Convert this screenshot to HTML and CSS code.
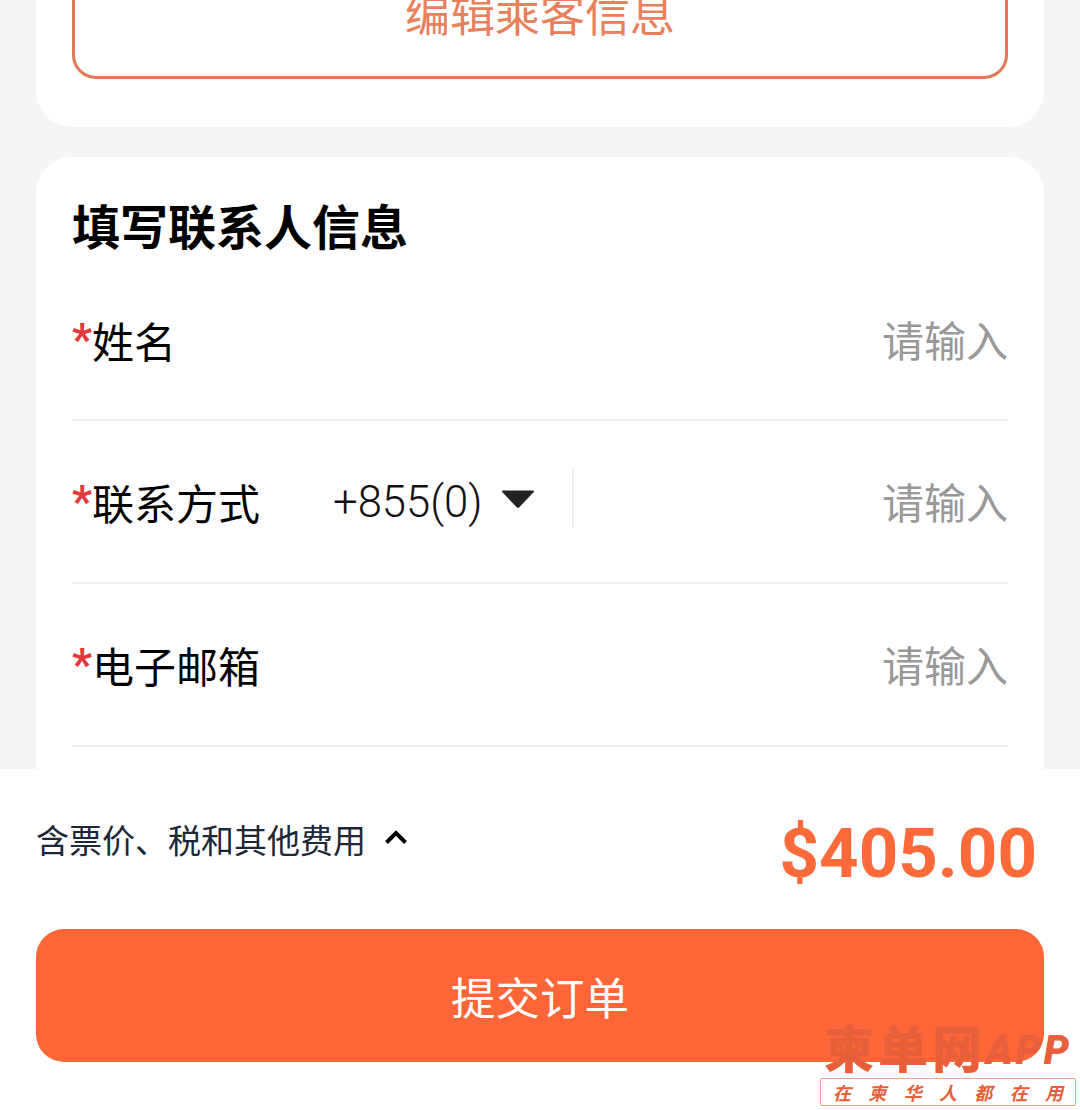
FILE: index.html
```html
<!DOCTYPE html>
<html lang="zh-CN">

<head>
	<meta charset="UTF-8">
	<meta name="viewport" content="width=device-width, initial-scale=1.0">
	<title>填写联系人信息</title>
	<link rel="stylesheet" href="styles.css">
</head>

<body>
	<div class="page">
		<!-- 乘客信息 -->
		<section class="card card-passenger">
			<button class="edit-btn" type="button">编辑乘客信息</button>
		</section>

		<!-- 联系人信息 -->
		<section class="card card-contact">
			<h2 class="card-title">填写联系人信息</h2>

			<div class="form-row">
				<label class="row-label"><span class="star">*</span>姓名</label>
				<span class="placeholder">请输入</span>
			</div>

			<div class="form-row">
				<label class="row-label"><span class="star">*</span>联系方式</label>
				<div class="phone-code">
					<span>+855(0)</span>
					<svg class="caret" width="34" height="20" viewBox="0 0 34 20">
						<path d="M2 1.5h30a1 1 0 0 1 .8 1.6L18 18.500a1.500 1.500 0 0 1-2 0L1.200 3.100A1 1 0 0 1 2 1.500z" fill="#222"/>
					</svg>
				</div>
				<span class="phone-sep"></span>
				<span class="placeholder">请输入</span>
			</div>

			<div class="form-row">
				<label class="row-label"><span class="star">*</span>电子邮箱</label>
				<span class="placeholder">请输入</span>
			</div>
		</section>
	</div>

	<!-- 底部价格栏 -->
	<footer class="bottom-bar">
		<div class="price-row">
			<div class="price-note">
				<span>含票价、税和其他费用</span>
				<svg class="note-arrow" width="24" height="16" viewBox="0 0 24 16">
					<path d="M2.500 13.500L12 4l9.500 9.500" fill="none" stroke="#000" stroke-width="4"/>
				</svg>
			</div>
			<div class="price">$405.00</div>
		</div>
		<button class="submit-btn" type="button">提交订单</button>
	</footer>

	<!-- 水印 -->
	<div class="watermark">
		<div class="wm-logo"><span class="wm-name">柬单网</span><span class="wm-app">APP</span></div>
		<div class="wm-slogan">
			<span>在</span><span>柬</span><span>华</span><span>人</span><span>都</span><span>在</span><span>用</span>
		</div>
	</div>
</body>

</html>
```

FILE: styles.css
```css
* {
	box-sizing: border-box;
}

html,
body {
	margin: 0;
	padding: 0;
}

body {
	position: relative;
	height: 1110px;
	overflow: hidden;
	background-color: #f5f5f5;
	font-family: Roboto, "Noto Sans CJK SC", sans-serif;
	color: #000;
}

.page {
	padding: 0 36px;
}

.card {
	background: #fff;
	border-radius: 36px;
	padding: 0 36px;
}

.card-passenger {
	margin-top: -49px;
	padding-bottom: 48px;
	margin-bottom: 30px;
}

.edit-btn {
	display: block;
	width: 100%;
	height: 128px;
	border: 3px solid #e07a58;
	border-radius: 24px;
	background: #fff;
	color: #e8805c;
	font-family: inherit;
	font-size: 45px;
	padding: 0 0 6px;
}

.card-contact {
	padding-top: 41px;
	height: 640px;
}

.card-title {
	margin: 0;
	font-size: 48px;
	line-height: 62px;
	font-weight: 700;
}

.form-row {
	display: flex;
	align-items: center;
	height: 163px;
	border-bottom: 2px solid #eee;
}

.card-title + .form-row {
	height: 161px;
}

.row-label {
	font-size: 42px;
	line-height: 56px;
	width: 261px;
	flex: none;
	margin-top: 8px;
	white-space: nowrap;
}

.star {
	color: #e5383b;
	font-size: 44px;
	font-weight: 700;
	line-height: 1;
	vertical-align: 3px;
}

.placeholder {
	margin-left: auto;
	margin-top: -2px;
	font-size: 42px;
	color: #999;
}

.phone-code {
	display: flex;
	align-items: center;
	gap: 18px;
	margin-top: 2px;
	font-size: 43.600px;
	font-weight: 300;
	color: #111;
}

.caret {
	margin-top: -8px;
}

.phone-sep {
	width: 2px;
	height: 60px;
	margin: -6px 0 0 37px;
	background: #eee;
}

.bottom-bar {
	position: absolute;
	left: 0;
	right: 0;
	top: 769px;
	bottom: 0;
	background: #fff;
	padding: 0 36px;
}

.price-row {
	display: flex;
	justify-content: space-between;
	align-items: center;
	height: 160px;
}

.price-note {
	display: flex;
	align-items: center;
	gap: 18px;
	font-size: 33px;
	color: #1c2738;
	margin-top: -20px;
}

.note-arrow {
	margin-top: -4px;
}

.price {
	font-family: Roboto, sans-serif;
	font-weight: 700;
	font-size: 69px;
	color: #fd6a3a;
	margin-top: 8px;
	margin-right: 7px;
}

.submit-btn {
	display: block;
	width: 100%;
	height: 133px;
	border: none;
	border-radius: 28px;
	background-color: #ff6637;
	color: #fff;
	font-family: inherit;
	font-size: 44.500px;
	padding: 0;
}

.watermark {
	position: absolute;
	left: 820px;
	top: 1026px;
	width: 256px;
}

.wm-logo {
	display: flex;
	align-items: center;
	height: 50px;
	padding-left: 4px;
	color: #e85f3b;
	font-weight: 900;
	line-height: 1;
}

.wm-name {
	font-size: 50px;
	letter-spacing: 4px;
	white-space: nowrap;
}

.wm-app {
	font-family: Roboto, sans-serif;
	font-size: 40px;
	font-style: italic;
	letter-spacing: 3px;
}

.wm-slogan {
	display: flex;
	justify-content: space-between;
	align-items: center;
	height: 28px;
	margin-top: 2px;
	padding: 0 12px;
	background: #fff;
	border: 1px solid #eda28b;
	border-radius: 2px;
	color: #e85f3b;
	font-size: 18px;
	font-weight: 700;
	font-style: italic;
}
```
